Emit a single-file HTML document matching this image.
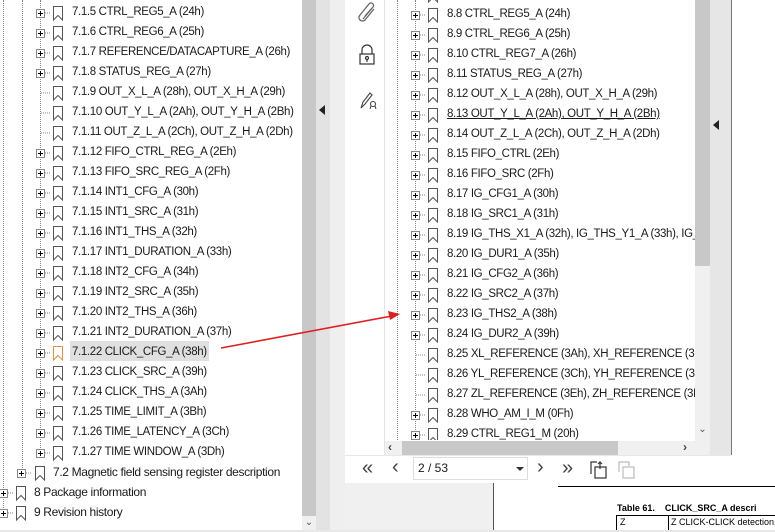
<!DOCTYPE html>
<html><head><meta charset="utf-8"><style>
*{margin:0;padding:0;box-sizing:border-box}
body{width:775px;height:532px;overflow:hidden;background:#fff;font-family:"Liberation Sans",sans-serif;font-size:12px;color:#1a1a1a;position:relative}
.a{position:absolute}
.r{position:absolute;height:20px;line-height:19px;white-space:nowrap;letter-spacing:-0.35px;font-size:11.5px}
.p{position:absolute;width:9px;height:9px;border:1px solid #888;background:#fff}
.p:before{content:"";position:absolute;left:1px;top:3px;width:5px;height:1px;background:#000}
.p:after{content:"";position:absolute;left:3px;top:1px;width:1px;height:5px;background:#000}
.vd{position:absolute;border-left:1px dotted #888;width:0}
</style></head><body>

<div class="vd" style="left:3px;top:0;height:512px"></div>
<div class="vd" style="left:22px;top:0;height:472px"></div>
<div class="vd" style="left:40px;top:0;height:452px"></div>

<!-- left scroll -->
<div class="a" style="left:302px;top:0;width:14px;height:532px;background:#c8c8c8"></div>
<div class="a" style="left:302px;top:516px;width:14px;height:16px;background:#f0f0f0;color:#555;font-size:10px;text-align:center;line-height:14px">&#8964;</div>
<div class="a" style="left:316px;top:0;width:14px;height:532px;background:#e3e3e3"></div>
<div class="a" style="left:330px;top:0;width:15px;height:532px;background:#efefef"></div>
<div class="a" style="left:319px;top:105px;width:0;height:0;border-top:5px solid transparent;border-bottom:5px solid transparent;border-right:6px solid #222"></div>

<!-- overlay panel -->
<div class="a" style="left:345px;top:0;width:386px;height:483px;background:#fff"></div>
<div class="a" style="left:384px;top:0;width:1px;height:455px;background:#e4e4e4"></div>
<div class="a" style="left:710px;top:0;width:21px;height:455px;background:#e6e6e6"></div>
<div class="a" style="left:731px;top:0;width:1px;height:455px;background:#777"></div>
<div class="a" style="left:713px;top:120px;width:0;height:0;border-top:5px solid transparent;border-bottom:5px solid transparent;border-right:6px solid #222"></div>
<svg class="a" style="left:357px;top:2px" width="22" height="22" viewBox="0 0 22 22" fill="none" stroke="#666" stroke-width="1.3"><path d="M6 17 L16 5 a2.5 2.5 0 0 0 -4 -3 L3 13 a3.5 3.5 0 0 0 5 5 L17 7"/><path d="M8 14 L15 6"/></svg>
<svg class="a" style="left:358px;top:44px" width="18" height="22" viewBox="0 0 18 22" fill="none" stroke="#333" stroke-width="1.2"><path d="M4 10 V6 a5 5 0 0 1 10 0 V10"/><rect x="2" y="10" width="14" height="10"/><circle cx="9" cy="14" r="1.5"/><path d="M9 15.5 V18"/></svg>
<svg class="a" style="left:358px;top:90px" width="22" height="22" viewBox="0 0 22 22" fill="none" stroke="#444" stroke-width="1.1"><path d="M3 18 L5 12 L12 3 L14 5 L7 14 Z M3 18 L7 14"/><circle cx="15" cy="14" r="2.5"/><path d="M13 16 L12 19 M17 16 L18 19"/></svg>

<div class="vd" style="left:397px;top:0;height:440px"></div>
<div class="vd" style="left:415px;top:0;height:440px"></div>

<!-- right vscroll -->
<div class="a" style="left:695px;top:0;width:15px;height:441px;background:#f0f0f0"></div>
<div class="a" style="left:695px;top:0;width:15px;height:266px;background:#c8c8c8"></div>
<div class="a" style="left:695px;top:424px;width:15px;height:16px;color:#555;font-size:10px;text-align:center">&#8964;</div>
<div class="a" style="left:385px;top:441px;width:310px;height:14px;background:#f0f0f0"></div>
<div class="a" style="left:402px;top:441px;width:216px;height:14px;background:#c8c8c8"></div>
<div class="a" style="left:388px;top:440px;font-size:12px;color:#444;font-weight:bold">&lsaquo;</div>
<div class="a" style="left:683px;top:440px;font-size:12px;color:#444;font-weight:bold">&rsaquo;</div>
<div class="a" style="left:695px;top:441px;width:15px;height:14px;background:#f0f0f0"></div>
<div class="a" style="left:345px;top:455px;width:386px;height:1px;background:#e8e8e8"></div>

<!-- toolbar -->
<div class="a" style="left:362px;top:457px;font-size:20px;color:#444;line-height:22px">&laquo;</div>
<div class="a" style="left:392px;top:456px;font-size:20px;color:#444;line-height:22px">&lsaquo;</div>
<div class="a" style="left:413px;top:457px;width:115px;height:23px;border:1px solid #ddd;padding-left:4px;line-height:21px;font-size:12px">2 / 53</div>
<div class="a" style="left:516px;top:467px;width:0;height:0;border-left:4px solid transparent;border-right:4px solid transparent;border-top:4px solid #333"></div>
<div class="a" style="left:537px;top:456px;font-size:20px;color:#444;line-height:22px">&rsaquo;</div>
<div class="a" style="left:562px;top:457px;font-size:20px;color:#444;line-height:22px">&raquo;</div>
<svg class="a" style="left:589px;top:460px" width="20" height="20" viewBox="0 0 20 20" fill="none" stroke="#333" stroke-width="1.2"><path d="M2 14 V2 H8"/><rect x="6" y="7" width="11" height="11"/><path d="M11 9 V2 M9 4 L11 2 L13 4"/></svg>
<svg class="a" style="left:617px;top:460px" width="20" height="20" viewBox="0 0 20 20" fill="none" stroke="#bbb" stroke-width="1.2"><path d="M2 12 V2 H12 V6"/><rect x="6" y="7" width="11" height="11"/></svg>

<!-- bottom area -->
<div class="a" style="left:345px;top:483px;width:148px;height:49px;background:#f0f0f0"></div>
<div class="a" style="left:493px;top:483px;width:1px;height:49px;background:#555"></div>
<div class="a" style="left:558px;top:486px;width:217px;height:1px;background:#000"></div>
<div class="a" style="left:617px;top:503px;font-size:9px;font-weight:bold;color:#000;white-space:nowrap">Table 61.&nbsp;&nbsp;&nbsp;&nbsp;CLICK_SRC_A descri</div>
<div class="a" style="left:616px;top:515px;width:159px;height:1px;background:#000"></div>
<div class="a" style="left:616px;top:515px;width:1px;height:17px;background:#000"></div>
<div class="a" style="left:668px;top:515px;width:1px;height:17px;background:#000"></div>
<div class="a" style="left:620px;top:517px;font-size:9px;color:#000">Z</div>
<div class="a" style="left:671px;top:517px;font-size:9px;color:#000;white-space:nowrap">Z CLICK-CLICK detection.</div>
<div class="a" style="left:0;top:530px;width:775px;height:2px;background:#e8e8e8"></div>

<!-- left rows -->
<div class="a" style="left:70px;top:341px;width:139px;height:20px;background:#e0e0e0"></div>
<div>
<div class="p" style="left:36px;top:9px"></div><div class="r" style="left:72px;top:3px">7.1.5 CTRL_REG5_A (24h)</div>
<div class="p" style="left:36px;top:29px"></div><div class="r" style="left:72px;top:23px">7.1.6 CTRL_REG6_A (25h)</div>
<div class="p" style="left:36px;top:49px"></div><div class="r" style="left:72px;top:43px">7.1.7 REFERENCE/DATACAPTURE_A (26h)</div>
<div class="p" style="left:36px;top:69px"></div><div class="r" style="left:72px;top:63px">7.1.8 STATUS_REG_A (27h)</div>
<div class="r" style="left:72px;top:83px">7.1.9 OUT_X_L_A (28h), OUT_X_H_A (29h)</div>
<div class="r" style="left:72px;top:103px">7.1.10 OUT_Y_L_A (2Ah), OUT_Y_H_A (2Bh)</div>
<div class="r" style="left:72px;top:123px">7.1.11 OUT_Z_L_A (2Ch), OUT_Z_H_A (2Dh)</div>
<div class="p" style="left:36px;top:149px"></div><div class="r" style="left:72px;top:143px">7.1.12 FIFO_CTRL_REG_A (2Eh)</div>
<div class="p" style="left:36px;top:169px"></div><div class="r" style="left:72px;top:163px">7.1.13 FIFO_SRC_REG_A (2Fh)</div>
<div class="p" style="left:36px;top:189px"></div><div class="r" style="left:72px;top:183px">7.1.14 INT1_CFG_A (30h)</div>
<div class="p" style="left:36px;top:209px"></div><div class="r" style="left:72px;top:203px">7.1.15 INT1_SRC_A (31h)</div>
<div class="p" style="left:36px;top:229px"></div><div class="r" style="left:72px;top:223px">7.1.16 INT1_THS_A (32h)</div>
<div class="p" style="left:36px;top:249px"></div><div class="r" style="left:72px;top:243px">7.1.17 INT1_DURATION_A (33h)</div>
<div class="p" style="left:36px;top:269px"></div><div class="r" style="left:72px;top:263px">7.1.18 INT2_CFG_A (34h)</div>
<div class="p" style="left:36px;top:289px"></div><div class="r" style="left:72px;top:283px">7.1.19 INT2_SRC_A (35h)</div>
<div class="p" style="left:36px;top:309px"></div><div class="r" style="left:72px;top:303px">7.1.20 INT2_THS_A (36h)</div>
<div class="p" style="left:36px;top:329px"></div><div class="r" style="left:72px;top:323px">7.1.21 INT2_DURATION_A (37h)</div>
<div class="p" style="left:36px;top:349px"></div><div class="r" style="left:72px;top:343px">7.1.22 CLICK_CFG_A (38h)</div>
<div class="p" style="left:36px;top:369px"></div><div class="r" style="left:72px;top:363px">7.1.23 CLICK_SRC_A (39h)</div>
<div class="p" style="left:36px;top:389px"></div><div class="r" style="left:72px;top:383px">7.1.24 CLICK_THS_A (3Ah)</div>
<div class="p" style="left:36px;top:409px"></div><div class="r" style="left:72px;top:403px">7.1.25 TIME_LIMIT_A (3Bh)</div>
<div class="p" style="left:36px;top:429px"></div><div class="r" style="left:72px;top:423px">7.1.26 TIME_LATENCY_A (3Ch)</div>
<div class="p" style="left:36px;top:449px"></div><div class="r" style="left:72px;top:443px">7.1.27 TIME WINDOW_A (3Dh)</div>
<div class="p" style="left:17px;top:469px"></div><div class="r" style="left:53px;top:463px;font-size:12px">7.2 Magnetic field sensing register description</div>
<div class="p" style="left:-1px;top:489px"></div><div class="r" style="left:34px;top:483px;font-size:12px">8 Package information</div>
<div class="p" style="left:-1px;top:509px"></div><div class="r" style="left:34px;top:503px;font-size:12px">9 Revision history</div>
</div>

<svg class="a" style="left:0;top:0" width="300" height="532" fill="none" stroke="#555" stroke-width="1">
<defs><path id="b" d="M0.5 0.5 H9.5 V14 L5 9.5 L0.5 14 Z"/></defs>
<path stroke="#888" stroke-dasharray="1 1" d="M45 13 H51 M45 33 H51 M45 53 H51 M45 73 H51 M41 93 H51 M41 113 H51 M41 133 H51 M45 153 H51 M45 173 H51 M45 193 H51 M45 213 H51 M45 233 H51 M45 253 H51 M45 273 H51 M45 293 H51 M45 313 H51 M45 333 H51 M45 353 H51 M45 373 H51 M45 393 H51 M45 413 H51 M45 433 H51 M45 453 H51 M26 473 H32 M8 493 H14 M8 513 H14"/>
<g transform="translate(53,6)"><use href="#b"/><use href="#b" y="20"/><use href="#b" y="40"/><use href="#b" y="60"/><use href="#b" y="80"/><use href="#b" y="100"/><use href="#b" y="120"/><use href="#b" y="140"/><use href="#b" y="160"/><use href="#b" y="180"/><use href="#b" y="200"/><use href="#b" y="220"/><use href="#b" y="240"/><use href="#b" y="260"/><use href="#b" y="280"/><use href="#b" y="300"/><use href="#b" y="320"/><use href="#b" y="360"/><use href="#b" y="380"/><use href="#b" y="400"/><use href="#b" y="420"/><use href="#b" y="440"/></g>
<use href="#b" x="53" y="346" stroke="#e8903a"/>
<use href="#b" x="35" y="466"/><use href="#b" x="16" y="486"/><use href="#b" x="16" y="506"/>
</svg>

<!-- right rows -->
<div class="a" style="left:0;top:0;width:695px;height:440px;overflow:hidden">
<div class="p" style="left:411px;top:-9px"></div>
<div class="p" style="left:411px;top:11px"></div><div class="r" style="left:447px;top:5px">8.8 CTRL_REG5_A (24h)</div>
<div class="p" style="left:411px;top:31px"></div><div class="r" style="left:447px;top:25px">8.9 CTRL_REG6_A (25h)</div>
<div class="p" style="left:411px;top:51px"></div><div class="r" style="left:447px;top:45px">8.10 CTRL_REG7_A (26h)</div>
<div class="p" style="left:411px;top:71px"></div><div class="r" style="left:447px;top:65px">8.11 STATUS_REG_A (27h)</div>
<div class="p" style="left:411px;top:91px"></div><div class="r" style="left:447px;top:85px">8.12 OUT_X_L_A (28h), OUT_X_H_A (29h)</div>
<div class="p" style="left:411px;top:111px"></div><div class="r" style="left:447px;top:105px;text-decoration:underline">8.13 OUT_Y_L_A (2Ah), OUT_Y_H_A (2Bh)</div>
<div class="p" style="left:411px;top:131px"></div><div class="r" style="left:447px;top:125px">8.14 OUT_Z_L_A (2Ch), OUT_Z_H_A (2Dh)</div>
<div class="p" style="left:411px;top:151px"></div><div class="r" style="left:447px;top:145px">8.15 FIFO_CTRL (2Eh)</div>
<div class="p" style="left:411px;top:171px"></div><div class="r" style="left:447px;top:165px">8.16 FIFO_SRC (2Fh)</div>
<div class="p" style="left:411px;top:191px"></div><div class="r" style="left:447px;top:185px">8.17 IG_CFG1_A (30h)</div>
<div class="p" style="left:411px;top:211px"></div><div class="r" style="left:447px;top:205px">8.18 IG_SRC1_A (31h)</div>
<div class="p" style="left:411px;top:231px"></div><div class="r" style="left:447px;top:225px">8.19 IG_THS_X1_A (32h), IG_THS_Y1_A (33h), IG_THS_Z1_A (34h)</div>
<div class="p" style="left:411px;top:251px"></div><div class="r" style="left:447px;top:245px">8.20 IG_DUR1_A (35h)</div>
<div class="p" style="left:411px;top:271px"></div><div class="r" style="left:447px;top:265px">8.21 IG_CFG2_A (36h)</div>
<div class="p" style="left:411px;top:291px"></div><div class="r" style="left:447px;top:285px">8.22 IG_SRC2_A (37h)</div>
<div class="p" style="left:411px;top:311px"></div><div class="r" style="left:447px;top:305px">8.23 IG_THS2_A (38h)</div>
<div class="p" style="left:411px;top:331px"></div><div class="r" style="left:447px;top:325px">8.24 IG_DUR2_A (39h)</div>
<div class="r" style="left:447px;top:345px">8.25 XL_REFERENCE (3Ah), XH_REFERENCE (3Bh)</div>
<div class="r" style="left:447px;top:365px">8.26 YL_REFERENCE (3Ch), YH_REFERENCE (3Dh)</div>
<div class="r" style="left:447px;top:385px">8.27 ZL_REFERENCE (3Eh), ZH_REFERENCE (3Fh)</div>
<div class="p" style="left:411px;top:411px"></div><div class="r" style="left:447px;top:405px">8.28 WHO_AM_I_M (0Fh)</div>
<div class="p" style="left:411px;top:431px"></div><div class="r" style="left:447px;top:425px">8.29 CTRL_REG1_M (20h)</div>
<svg class="a" style="left:0;top:0" width="695" height="440" fill="none" stroke="#555" stroke-width="1">
<defs><path id="c" d="M0.5 0.5 H9.5 V14 L5 9.5 L0.5 14 Z"/></defs>
<path stroke="#888" stroke-dasharray="1 1" d="M420 -5 H426 M420 15 H426 M420 35 H426 M420 55 H426 M420 75 H426 M420 95 H426 M420 115 H426 M420 135 H426 M420 155 H426 M420 175 H426 M420 195 H426 M420 215 H426 M420 235 H426 M420 255 H426 M420 275 H426 M420 295 H426 M420 315 H426 M420 335 H426 M416 355 H426 M416 375 H426 M416 395 H426 M420 415 H426 M420 435 H426"/>
<g transform="translate(428,-12)"><use href="#c"/><use href="#c" y="20"/><use href="#c" y="40"/><use href="#c" y="60"/><use href="#c" y="80"/><use href="#c" y="100"/><use href="#c" y="120"/><use href="#c" y="140"/><use href="#c" y="160"/><use href="#c" y="180"/><use href="#c" y="200"/><use href="#c" y="220"/><use href="#c" y="240"/><use href="#c" y="260"/><use href="#c" y="280"/><use href="#c" y="300"/><use href="#c" y="320"/><use href="#c" y="340"/><use href="#c" y="360"/><use href="#c" y="380"/><use href="#c" y="400"/><use href="#c" y="420"/><use href="#c" y="440"/></g>
</svg>
</div>

<!-- arrow -->
<svg class="a" style="left:0;top:0" width="775" height="532"><line x1="221" y1="348" x2="392" y2="316" stroke="#e02020" stroke-width="1.6"/><path d="M400 314 L388 311 L390 320 Z" fill="#e02020"/></svg>
</body></html>
